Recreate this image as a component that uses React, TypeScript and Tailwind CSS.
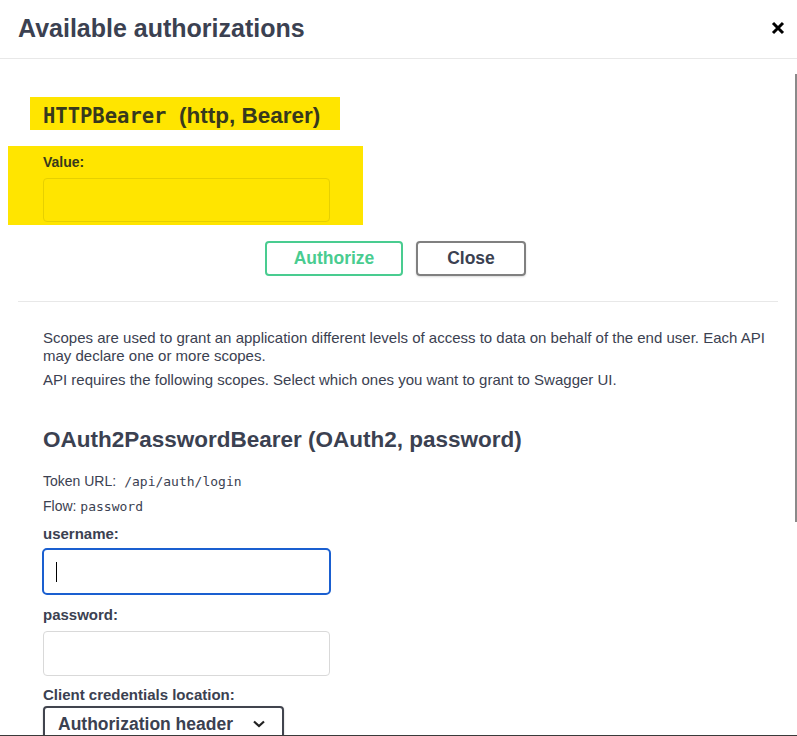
import React from "react";

const sans = { fontFamily: '"Liberation Sans", Arial, sans-serif' };
const mono = { fontFamily: '"DejaVu Sans Mono", "Liberation Mono", monospace' };

export default function App() {
  return (
    <div
      className="relative h-[736px] w-[797px] overflow-hidden bg-white text-[#3b4151]"
      style={sans}
    >
      {/* header */}
      <div className="flex h-[59px] items-center justify-between border-b border-[#e8e8e8] pl-[18px] pr-[12px]">
        <h2 className="pb-[2px] text-[25px] font-bold leading-none text-[#3b4151]">
          Available authorizations
        </h2>
        <svg width="14" height="14" viewBox="0 0 14 14" className="mb-[2px]">
          <path d="M2 2 L12 12 M12 2 L2 12" stroke="#000" strokeWidth="3" strokeLinecap="butt" />
        </svg>
      </div>

      <div className="px-[18px]">
        {/* HTTPBearer */}
        <div className="pt-[38px]">
          <div className="ml-[12px] flex h-[33px] w-[310px] items-center bg-[#ffe500] pl-[13px] pt-[5px] text-[22.5px] font-bold leading-none text-[#37391d]">
            <span style={mono} className="text-[20.5px]">
              HTTPBearer
            </span>
            <span className="whitespace-pre">  (http, Bearer)</span>
          </div>
        </div>
        <div className="-ml-[10px] mt-[16px] flex h-[79px] w-[355px] flex-col bg-[#ffe500] pl-[35px] pt-[8px]">
          <label className="text-[14px] font-bold leading-[16px] text-[#37391d]">Value:</label>
          <div className="mt-[8px] h-[44px] w-[287px] rounded-[4px] border border-[#e6d000]" />
        </div>

        {/* buttons */}
        <div className="mt-[16px] flex gap-[13px] pl-[247px]">
          <button className="h-[35px] w-[138px] rounded-[4px] border-2 border-[#49cc90] text-[17.5px] font-bold text-[#49cc90]">
            Authorize
          </button>
          <button className="h-[35px] w-[110px] rounded-[4px] border-2 border-[#808080] text-[17.5px] font-bold text-[#3b4151] shadow-[0_1px_2px_rgba(0,0,0,0.15)]">
            Close
          </button>
        </div>

        <div className="mt-[25px] h-px w-[760px] bg-[#e8e8e8]" />

        {/* scopes description */}
        <div className="pl-[25px] pt-[27px] text-[15px] leading-[18px] text-[#3b4151]">
          <p className="w-[735px]">
            Scopes are used to grant an application different levels of access to data on behalf of the end user. Each API may declare one or more scopes.
          </p>
          <p className="mt-[6px]">API requires the following scopes. Select which ones you want to grant to Swagger UI.</p>
        </div>

        {/* OAuth2 */}
        <div className="pl-[25px]">
          <h4 className="mt-[37px] text-[22.5px] font-bold leading-[28px]">
            OAuth2PasswordBearer (OAuth2, password)
          </h4>
          <p className="mt-[15px] text-[14px] leading-[24px]">
            Token URL:
            <code className="ml-[8px] text-[13px]" style={mono}>
              /api/auth/login
            </code>
          </p>
          <p className="text-[14px] leading-[24px]">
            Flow:{" "}
            <code className="text-[13px]" style={mono}>
              password
            </code>
          </p>
          <label className="mt-[5px] block text-[15px] font-bold leading-[20px]">username:</label>
          <div className="mt-[4px] flex h-[47px] w-[289px] -ml-px items-center rounded-[5px] border-2 border-[#1a5fd0] pl-[12px]">
            <div className="h-[20px] w-px bg-black" />
          </div>
          <label className="mt-[10px] block text-[15px] font-bold leading-[20px]">password:</label>
          <div className="mt-[6px] h-[45px] w-[287px] rounded-[4px] border border-[#d9d9d9]" />
          <label className="mt-[9px] block text-[15px] font-bold leading-[20px]">
            Client credentials location:
          </label>
          <div className="mt-px flex h-[36px] w-[241px] items-center rounded-[4px] border-2 border-[#41444e] pl-[13px] pr-[16px] shadow-[0_1px_2px_rgba(0,0,0,0.25)]">
            <span className="text-[17.5px] font-bold">Authorization header</span>
            <svg width="14" height="10" viewBox="0 0 14 10" className="ml-auto">
              <path d="M2 2.5 L7 7 L12 2.5" stroke="#222" strokeWidth="2.2" fill="none" />
            </svg>
          </div>
        </div>
      </div>

      {/* scrollbar */}
      <div className="absolute right-0 top-[74px] h-[448px] w-[2px] bg-[#8a8a8a]" />
      {/* bottom edge */}
      <div className="absolute bottom-0 left-0 h-px w-full bg-[#3a3a3a]" />
    </div>
  );
}
